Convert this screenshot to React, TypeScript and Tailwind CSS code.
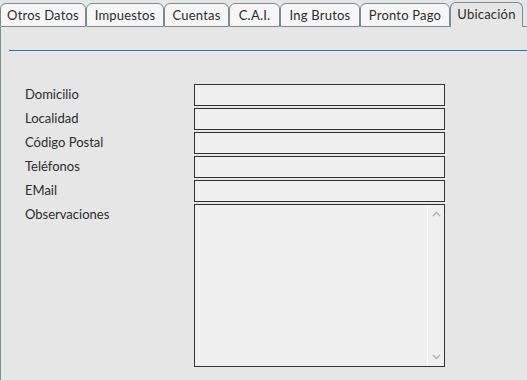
import React from "react";

const tabs = [
  { label: "Otros Datos", w: "w-[86px]" },
  { label: "Impuestos", w: "w-[78px]" },
  { label: "Cuentas", w: "w-[65px]" },
  { label: "C.A.I.", w: "w-[51px]" },
  { label: "Ing Brutos", w: "w-[80px]" },
  { label: "Pronto Pago", w: "w-[90px]" },
];

const fields = ["Domicilio", "Localidad", "Código Postal", "Teléfonos", "EMail"];

export default function App() {
  return (
    <div
      className="w-[527px] h-[380px] overflow-hidden bg-[#e6e6e6] text-[#2c2c2c] flex flex-col"
      style={{ fontFamily: "Lato, 'Open Sans', sans-serif" }}
    >
      <div className="flex items-end h-[27px] shrink-0">
        {tabs.map((t) => (
          <div
            key={t.label}
            className={`${t.w} h-[24px] shrink-0 border border-[#7d8b91] rounded-t-[6px] bg-[#f6f6f6] flex items-center justify-center text-[13px] leading-none tracking-[0.2px]`}
          >
            {t.label}
          </div>
        ))}
        <div className="w-[73px] h-[25px] shrink-0 border border-b-0 border-[#7d8b91] rounded-t-[6px] bg-[#e6e6e6] flex items-center justify-center text-[13px] leading-none pb-[1px] tracking-[0.2px]">
          Ubicación
        </div>
        <div className="flex-1 h-px bg-[#7d8b91]" />
      </div>
      <div className="flex-1 border-l border-[#7d8b91] flex flex-col">
        <div className="mt-[23px] ml-[8px] h-px bg-[#2a78c2]" />
        <div className="mt-[33px] pl-[24px] flex flex-col gap-[2px]">
          {fields.map((f) => (
            <div key={f} className="flex">
              <div className="w-[169px] h-[22px] text-[13px] leading-[20px]">{f}</div>
              <div className="w-[251px] h-[22px] border border-[#333333] bg-[#f0f0f0]" />
            </div>
          ))}
          <div className="flex">
            <div className="w-[169px] text-[13px] leading-[20px]">Observaciones</div>
            <div className="w-[251px] h-[163px] border border-[#333333] bg-[#f0f0f0] flex justify-end">
              <div className="w-[17px] h-full border-l border-[#fbfbfb] flex flex-col items-center justify-between py-[6px]">
                <svg width="9" height="6" viewBox="0 0 9 6">
                  <path d="M1 5 L4.5 1.5 L8 5" stroke="#b5b5b5" strokeWidth="1.6" fill="none" />
                </svg>
                <svg width="9" height="6" viewBox="0 0 9 6">
                  <path d="M1 1 L4.5 4.5 L8 1" stroke="#b5b5b5" strokeWidth="1.6" fill="none" />
                </svg>
              </div>
            </div>
          </div>
        </div>
      </div>
    </div>
  );
}
